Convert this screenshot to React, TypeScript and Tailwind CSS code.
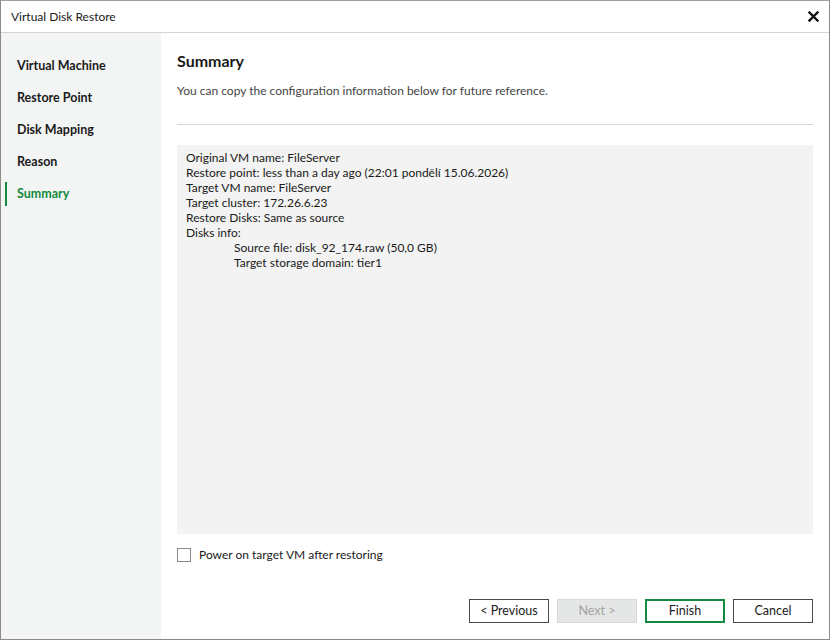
const font = { fontFamily: 'Lato, "Noto Sans", sans-serif' };

const steps = ["Virtual Machine", "Restore Point", "Disk Mapping", "Reason", "Summary"];

const summaryLines = [
  "Original VM name: FileServer",
  "Restore point: less than a day ago (22:01 pondělí 15.06.2026)",
  "Target VM name: FileServer",
  "Target cluster: 172.26.6.23",
  "Restore Disks: Same as source",
  "Disks info:",
];

const diskLines = ["Source file: disk_92_174.raw (50,0 GB)", "Target storage domain: tier1"];

const Sidebar = () => (
  <div className="flex w-[160px] shrink-0 flex-col bg-[#f3f4f4] pt-[17px]">
    {steps.map((s) => {
      const active = s === "Summary";
      return (
        <div key={s} className="relative flex h-[32px] items-center pl-[16px]">
          {active && <div className="absolute left-[4px] top-[4px] h-[24px] w-[2px] bg-[#138a40]" />}
          <span
            className={
              active
                ? "text-[12.5px] font-bold text-[#138a40]"
                : "text-[12.5px] font-bold text-[#1a1a1a]"
            }
          >
            {s}
          </span>
        </div>
      );
    })}
  </div>
);

const Button = ({ label, variant }: { label: string; variant?: "primary" | "disabled" }) => (
  <button
    type="button"
    className={
      variant === "primary"
        ? "flex h-[24px] w-[80px] items-center justify-center border-2 border-[#138a40] bg-white text-[12.5px] text-[#1a1a1a]"
        : variant === "disabled"
          ? "flex h-[24px] w-[80px] items-center justify-center border border-[#d8d9d9] bg-[#e5e6e6] text-[12.5px] text-[#a2a3a3]"
          : "flex h-[24px] w-[80px] items-center justify-center border border-[#4a4a4a] bg-white text-[12.5px] text-[#1a1a1a]"
    }
  >
    {label}
  </button>
);

export default function App() {
  return (
    <div className="h-[640px] w-[830px] bg-white" style={font}>
      <div className="flex h-full w-full flex-col border border-[#8a8a8a] border-t-[#a0a0a0]">
        <div className="flex h-[32px] shrink-0 items-center justify-between border-b border-[#d4d4d4] pl-[10px] pr-[10px]">
          <span className="text-[12px] text-[#1a1a1a]">Virtual Disk Restore</span>
          <svg width="11" height="11" viewBox="0 0 11 11">
            <path d="M1.5 1.5 L9.5 9.5 M9.5 1.5 L1.5 9.5" stroke="#111" strokeWidth="2.4" strokeLinecap="square" />
          </svg>
        </div>
        <div className="flex min-h-0 flex-1">
          <Sidebar />
          <div className="flex flex-1 flex-col pl-[16px] pr-[16px]">
            <h1 className="mt-[17px] text-[16px] font-bold leading-[22px] text-[#1a1a1a]">Summary</h1>
            <p className="mt-[10px] text-[12px] leading-[18px] text-[#444]">
              You can copy the configuration information below for future reference.
            </p>
            <div className="mt-[24px] h-px bg-[#d6d6d6]" />
            <div className="mt-[20px] h-[389px] bg-[#f2f3f2] px-[9px] pt-[5px] text-[12px] leading-[15px] text-[#1a1a1a]">
              {summaryLines.map((l) => (
                <div key={l}>{l}</div>
              ))}
              {diskLines.map((l) => (
                <div key={l} className="pl-[48px]">
                  {l}
                </div>
              ))}
            </div>
            <label className="mt-[12px] flex items-center gap-[8px]">
              <span className="h-[14px] w-[14px] border border-[#8a8a8a] bg-white" />
              <span className="text-[12px] text-[#1a1a1a]">Power on target VM after restoring</span>
            </label>
            <div className="mt-auto mb-[16px] flex justify-end gap-[8px]">
              <Button label="< Previous" />
              <Button label="Next >" variant="disabled" />
              <Button label="Finish" variant="primary" />
              <Button label="Cancel" />
            </div>
          </div>
        </div>
      </div>
    </div>
  );
}
